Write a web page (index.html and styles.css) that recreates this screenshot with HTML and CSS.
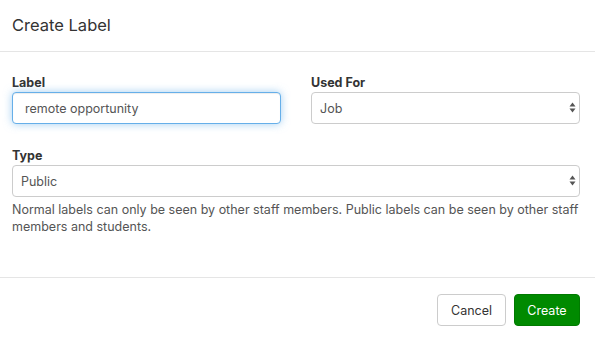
FILE: index.html
```html
<!DOCTYPE html>
<html>
<head>
<meta charset="utf-8">
<link rel="stylesheet" href="styles.css">
</head>
<body>
<div class="modal">
  <div class="modal-header">
    <h4 class="modal-title">Create Label</h4>
  </div>
  <div class="modal-body">
    <div class="row">
      <div class="field">
        <label class="field-label">Label</label>
        <input class="control focused" type="text" value="remote opportunity">
      </div>
      <div class="field">
        <label class="field-label">Used For</label>
        <div class="select-wrap">
          <select class="control select"><option>Job</option></select>
          <svg class="arrows" width="7" height="11" viewBox="0 0 7 11"><path d="M3.5 0.5 L6.5 4.5 L0.5 4.5 Z" fill="#555"/><path d="M3.5 10.5 L6.5 6.5 L0.5 6.5 Z" fill="#555"/></svg>
        </div>
      </div>
    </div>
    <div class="field type-field">
      <label class="field-label">Type</label>
      <div class="select-wrap">
        <select class="control select"><option>Public</option></select>
        <svg class="arrows" width="7" height="11" viewBox="0 0 7 11"><path d="M3.5 0.5 L6.5 4.5 L0.5 4.5 Z" fill="#555"/><path d="M3.5 10.5 L6.5 6.5 L0.5 6.5 Z" fill="#555"/></svg>
      </div>
      <p class="help">Normal labels can only be seen by other staff members. Public labels can be seen by other staff members and students.</p>
    </div>
  </div>
  <div class="modal-footer">
    <button class="btn btn-default">Cancel</button>
    <button class="btn btn-success">Create</button>
  </div>
</div>
</body>
</html>
```
FILE: styles.css
```css
html, body {
  margin: 0;
  padding: 0;
  background: #fff;
}
body {
  font-family: Inter, "Noto Sans", "Liberation Sans", sans-serif;
  font-size: 12.5px;
  color: #333;
}
.modal {
  width: 595px;
  height: 341px;
  display: flex;
  flex-direction: column;
  box-sizing: border-box;
}
.modal-header {
  height: 52px;
  box-sizing: border-box;
  border-bottom: 1px solid #e5e5e5;
  padding: 14px 15px 0 12px;
}
.modal-title {
  margin: 0;
  font-size: 16.5px;
  font-weight: 400;
  line-height: 22px;
  color: #333;
}
.modal-body {
  flex: 1;
  padding: 22px 15px 0 12px;
}
.row {
  display: grid;
  grid-template-columns: 269px 269px;
  column-gap: 30px;
}
.field {
  display: flex;
  flex-direction: column;
}
.type-field {
  margin-top: 23px;
}
.field-label {
  font-weight: 700;
  line-height: 18px;
  color: #333;
}
.control {
  height: 32px;
  box-sizing: border-box;
  border: 1px solid #ccc;
  border-radius: 4px;
  background: #fff;
  font-family: inherit;
  font-size: 12.5px;
  color: #555;
  margin: 0;
  width: 100%;
}
input.control {
  padding: 0 12px;
}
.focused {
  border-color: #66afe9;
  outline: 0;
  box-shadow: inset 0 1px 1px rgba(0,0,0,.075), 0 0 8px rgba(102,175,233,.6);
}
.select-wrap {
  position: relative;
}
.select {
  -webkit-appearance: none;
  appearance: none;
  padding: 0 20px 0 8px;
}
.arrows {
  position: absolute;
  right: 4px;
  top: 10px;
  pointer-events: none;
}
.help {
  margin: 4px 0 0;
  line-height: 17px;
  color: #555;
}
.modal-footer {
  height: 64px;
  box-sizing: border-box;
  border-top: 1px solid #e5e5e5;
  padding: 16px 15px 0 12px;
  display: flex;
  justify-content: flex-end;
  align-items: flex-start;
  gap: 8px;
}
.btn {
  height: 32px;
  box-sizing: border-box;
  border-radius: 4px;
  font-family: inherit;
  font-size: 12.5px;
  padding: 0 12px;
  border: 1px solid #ccc;
  cursor: pointer;
}
.btn-default {
  background: #fff;
  color: #333;
  width: 69px;
}
.btn-success {
  background: #008a00;
  border-color: #007a00;
  color: #fff;
  width: 66px;
}
```
